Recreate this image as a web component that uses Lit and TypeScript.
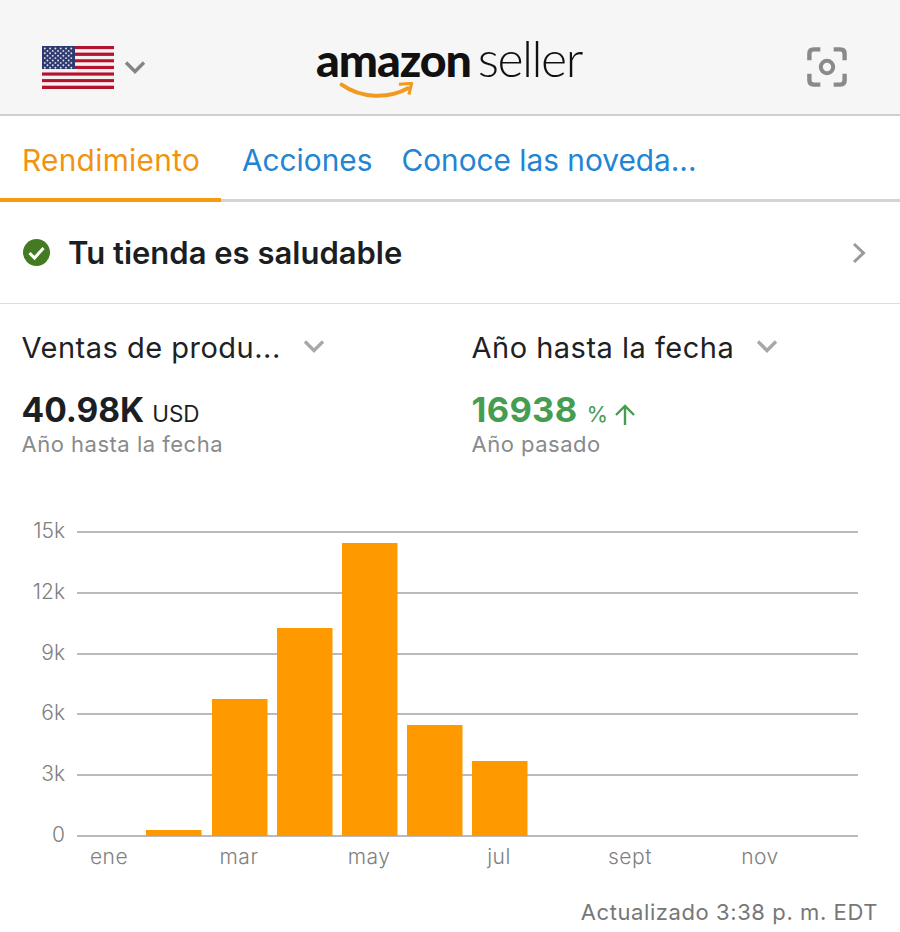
import { LitElement, html, css, svg } from "lit";
import { customElement } from "lit/decorators.js";

const chevron = (cls: string) => html`<svg class=${cls} viewBox="0 0 22 14" fill="none"><path d="M2 2.5 11 11.5 20 2.5" stroke="currentColor" stroke-width="3.4"/></svg>`;

@customElement("app-root")
export class AppRoot extends LitElement {
  static styles = css`
    :host { display: block; width: 900px; height: 932px; background: #fff; overflow: hidden; font-family: Inter, "Liberation Sans", sans-serif; color: #1b1f23; }
    .header { box-sizing: border-box; background: #f6f6f6; border-bottom: 2px solid #cfcfcf; height: 116px; display: grid; grid-template-columns: 1fr auto 1fr; align-items: center; padding: 20px 53px 0 42px; }
    .locale { display: flex; align-items: center; gap: 10px; }
    .flag { width: 72px; height: 43px; display: block; }
    .chev-head { width: 22px; height: 14px; color: #858585; }
    .logo { display: flex; align-items: baseline; gap: 7px; position: relative; color: #111; height: 66px; margin: -10px 0 0 9px; box-sizing: border-box; }
    .logo-a { font-family: Lato, sans-serif; font-weight: 900; font-size: 46.500px; letter-spacing: -1.100px; line-height: 58px; }
    .logo-s { font-family: Lato, sans-serif; font-weight: 300; font-size: 50px; letter-spacing: -1.500px; line-height: 58px; }
    .smile { position: absolute; left: 21px; top: 53px; width: 82px; height: 20px; }
    .scan { justify-self: end; width: 40px; height: 40px; }
    .tabs { height: 86px; box-sizing: border-box; border-bottom: 3px solid #d4d4d4; display: flex; font-size: 29.800px; color: #2284d2; }
    .tab { display: flex; align-items: center; height: 86px; box-sizing: border-box; padding-top: 2px; white-space: nowrap; }
    .tab.active { color: #f0940f; width: 221px; padding: 6px 0 0 22px; box-sizing: border-box; border-bottom: 4px solid #f79a10; letter-spacing: 0.300px; }
    .tab.b { margin-left: 21px; }
    .tab.c { margin-left: 29px; }
    .health { height: 102px; box-sizing: border-box; border-bottom: 1px solid #dedede; display: flex; align-items: center; padding: 0 34px 0 23px; font-size: 31px; font-weight: 600; }
    .health svg.ok { width: 27px; height: 27px; margin-right: 18px; }
    .health span { flex: 1; }
    .chev-r { width: 14px; height: 22px; color: #9a9a9a; }
    .metrics { display: grid; grid-template-columns: 450px 1fr; padding: 26px 0 0 21.500px; height: 200px; box-sizing: border-box; }
    .sel { display: flex; align-items: center; font-size: 29px; line-height: 36px; gap: 22px; color: #1e2124; letter-spacing: 0.500px; white-space: nowrap; }
    .chev-s { width: 22px; height: 14px; color: #a8a8a8; margin-bottom: 4px; }
    .val { margin-top: 22px; display: flex; align-items: baseline; font-size: 34.500px; font-weight: 700; line-height: 44px; letter-spacing: 0.300px; }
    .val.usd { letter-spacing: 0; font-size: 33.500px; }
    .unit { font-size: 22.500px; font-weight: 400; margin-left: 8px; letter-spacing: 0; }
    .green { color: #469c50; }
    .green .unit { margin-left: 9px; font-size: 22px; }
    .arrow { width: 22px; height: 22px; margin-left: 6px; align-self: center; margin-top: 6px; }
    .sub { font-size: 22px; line-height: 28px; color: #8a8a8a; margin-top: -6px; letter-spacing: 0.500px; }
    .chart { display: block; width: 900px; height: 380px; }
    .chart text { font-family: Inter, "Liberation Sans", sans-serif; font-size: 21px; font-weight: 300; fill: #808080; }
    .updated { text-align: right; padding-right: 22px; font-size: 22px; line-height: 28px; color: #777; letter-spacing: 0.580px; margin-top: 14px; }
  `;

  private flag() {
    const stripes = [];
    for (let i = 0; i < 13; i++) {
      stripes.push(svg`<rect x="0" y=${(i * 43) / 13} width="72" height=${43 / 13 + 0.05} fill=${i % 2 ? "#f6f0f0" : "#b3132f"}/>`);
    }
    const stars = [];
    for (let r = 0; r < 9; r++) {
      const n = r % 2 ? 5 : 6;
      for (let c = 0; c < n; c++) {
        stars.push(svg`<circle cx=${2.8 + c * 5.3 + (r % 2 ? 2.65 : 0)} cy=${2.5 + r * 2.4} r="0.95" fill="#dfe3ee"/>`);
      }
    }
    return html`<svg class="flag" viewBox="0 0 72 43">${stripes}<rect width="33" height="23" fill="#2e3a70"/>${stars}</svg>`;
  }

  private chart() {
    const ys: [string, number][] = [["15k", 532], ["12k", 593], ["9k", 654], ["6k", 714], ["3k", 775], ["0", 836]];
    const bars: [number, number][] = [[146, 830], [212, 699], [277, 628], [342, 543], [407, 725], [472, 761]];
    const months: [string, number][] = [["ene", 109], ["mar", 239], ["may", 369], ["jul", 499], ["sept", 630], ["nov", 760]];
    const off = 504;
    return html`<svg class="chart" viewBox="0 ${off} 900 380">
      ${ys.map(([t, y]) => svg`<line x1="77" x2="858" y1=${y} y2=${y} stroke="#a3a3a3" stroke-width="1.4"/><text x="65" y=${y + 6} text-anchor="end">${t}</text>`)}
      ${bars.map(([x, y]) => svg`<rect x=${x} y=${y} width="55.5" height=${836 - y} fill="#ff9900"/>`)}
      ${months.map(([t, x]) => svg`<text x=${x} y="864" text-anchor="middle" letter-spacing="0.5">${t}</text>`)}
    </svg>`;
  }

  render() {
    return html`
      <div class="header">
        <div class="locale">${this.flag()}${chevron("chev-head")}</div>
        <div class="logo">
          <span class="logo-a">amazon</span><span class="logo-s">seller</span>
          <svg class="smile" viewBox="0 0 82 22" fill="none">
            <path d="M1 3C22 18 52 19 74 7" stroke="#f19a20" stroke-width="4.4" stroke-linecap="round"/>
            <path d="M64 2.5 78 1.5 75 14" stroke="#f19a20" stroke-width="3.4" stroke-linejoin="round"/>
          </svg>
        </div>
        <svg class="scan" viewBox="0 0 42 42" fill="none" stroke="#8a8a8a" stroke-width="4.6">
          <path d="M2.5 14V7Q2.5 2.5 7 2.5H14"/>
          <path d="M28 2.5H35Q39.500 2.500 39.500 7V14"/>
          <path d="M2.500 28V35Q2.500 39.500 7 39.500H14"/>
          <path d="M28 39.500H35Q39.500 39.500 39.500 35V28"/>
          <circle cx="21" cy="21" r="6.500" stroke-width="4.200"/>
        </svg>
      </div>
      <div class="tabs">
        <div class="tab active">Rendimiento</div>
        <div class="tab b">Acciones</div>
        <div class="tab c">Conoce las noveda...</div>
      </div>
      <div class="health">
        <svg class="ok" viewBox="0 0 27 27"><circle cx="13.500" cy="13.500" r="13.500" fill="#437a22"/><path d="M6.500 14 11.500 19 20.500 9" fill="none" stroke="#fff" stroke-width="3"/></svg>
        <span>Tu tienda es saludable</span>
        <svg class="chev-r" viewBox="0 0 14 22" fill="none"><path d="M2 2 11.500 11 2 20" stroke="currentColor" stroke-width="3"/></svg>
      </div>
      <div class="metrics">
        <div>
          <div class="sel">Ventas de produ...${chevron("chev-s")}</div>
          <div class="val usd">40.98K<span class="unit">USD</span></div>
          <div class="sub">Año hasta la fecha</div>
        </div>
        <div>
          <div class="sel">Año hasta la fecha${chevron("chev-s")}</div>
          <div class="val green">16938<span class="unit">%</span>
            <svg class="arrow" viewBox="0 0 22 22" fill="none" stroke="currentColor" stroke-width="2.400"><path d="M11 21V2M2 11 11 2 20 11"/></svg>
          </div>
          <div class="sub">Año pasado</div>
        </div>
      </div>
      ${this.chart()}
      <div class="updated">Actualizado 3:38 p. m. EDT</div>
    `;
  }
}
